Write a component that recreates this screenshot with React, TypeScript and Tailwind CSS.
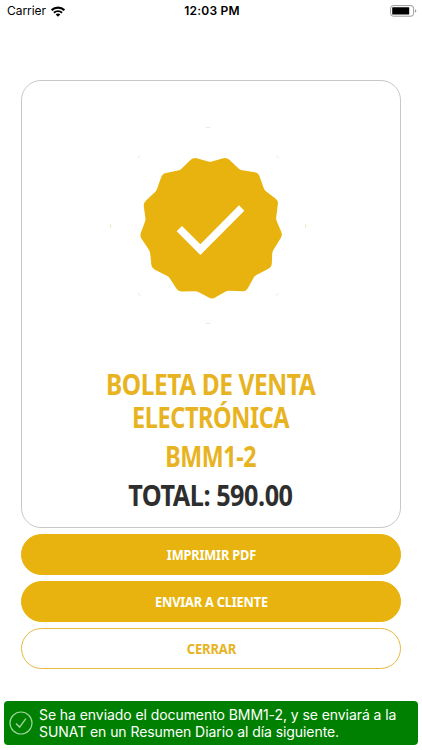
type Point = [number, number];

const badgeTips: Point[] = [
  [280, 112], [380, 112], [475, 158], [535, 242], [548, 345], [515, 441], [438, 514],
  [336, 538], [235, 515], [155, 444], [119, 348], [130, 249], [187, 161],
];

const badgeValleys: Point[] = [
  [330, 126], [421, 150], [493, 210], [528, 298], [517, 395], [464, 468], [381, 512],
  [291, 514], [206, 470], [150, 394], [137, 300], [169, 213], [240, 150],
];

// Small marks in a ring around the badge
const sparks = [
  "M317 23h14", "M112 114l9-8", "M528 106l8 8", "M32 312v12",
  "M617 312v12", "M113 519l9 8", "M528 527l8-7", "M317 610h14",
];

function roundedPath(points: Point[]) {
  const toward = (a: Point, b: Point, radius: number) => {
    const d = Math.hypot(b[0] - a[0], b[1] - a[1]);
    const x = a[0] + ((b[0] - a[0]) * radius) / d;
    const y = a[1] + ((b[1] - a[1]) * radius) / d;
    return `${x.toFixed(1)} ${y.toFixed(1)}`;
  };
  return (
    points
      .map((p, i) => {
        const prev = points[(i + points.length - 1) % points.length];
        const next = points[(i + 1) % points.length];
        // tips are rounder than the valleys between them
        const radius = i % 2 === 0 ? 11 : 6;
        return `${i === 0 ? "M" : "L"}${toward(p, prev, radius)}Q${p[0]} ${p[1]} ${toward(p, next, radius)}`;
      })
      .join("") + "Z"
  );
}

const badgePath = roundedPath(badgeTips.flatMap((tip, i) => [tip, badgeValleys[i]]));

function StatusBar() {
  return (
    <header className="grid h-[22px] grid-cols-3 items-center pl-[7px] pr-[5px] text-xs leading-none text-black">
      <div className="flex items-center gap-[5px]">
        <span className="tracking-[-0.05px]">Carrier</span>
        <svg viewBox="0 0 14 11" className="h-[11px] w-[14px]" fill="none" stroke="black">
          <path d="M0.6 4.2C4.1.8 9.9.8 13.4 4.2" strokeWidth="2.2" />
          <path d="M2.9 6.7C5.2 4.6 8.8 4.6 11.1 6.7" strokeWidth="1.9" />
          <path d="M4.7 8.4C6.1 7.2 7.9 7.2 9.3 8.4L7 10.7Z" fill="black" stroke="none" />
        </svg>
      </div>
      <span className="text-center font-semibold tracking-[0.2px]">12:03 PM</span>
      <svg viewBox="0 0 27 12" className="h-3 w-[27px] justify-self-end">
        <rect x="0.6" y="0.6" width="23" height="10.6" rx="2.6" fill="white" stroke="#9a9a9a" />
        <rect x="2.2" y="2.2" width="17" height="7.4" rx="0.6" fill="black" />
        <path d="M25 4.2c1.8.5 1.8 2.9 0 3.4z" fill="#999" />
      </svg>
    </header>
  );
}

function VerifiedBadge() {
  return (
    <svg viewBox="0 0 660 630" className="mr-[2px] h-[210px] w-[220px]">
      <path d={badgePath} fill="#e8b30e" />
      <path d="M230 334l16-16 55 55 116-117 16 16-132 133z" fill="white" />
      {sparks.map((d) => (
        <path key={d} d={d} stroke="#f1e8cc" strokeWidth="3" fill="none" />
      ))}
    </svg>
  );
}

const buttonBase =
  "flex h-[41px] w-full items-center justify-center rounded-full border font-['Noto_Sans'] text-[15px] font-bold tracking-[-0.2px]";

export default function App() {
  return (
    <div className="flex h-[750px] w-[422px] flex-col overflow-hidden bg-white font-['Inter',sans-serif]">
      <StatusBar />

      <main className="mt-[57.5px] flex flex-col px-[21px]">
        <section className="flex h-[448px] flex-col items-center rounded-[20px] border border-[#c8c8c8] pt-[39.5px] pr-px font-['Noto_Sans'] text-[28px] font-bold leading-[33px] tracking-[-0.5px] text-[#e8b321]">
          <VerifiedBadge />
          <h1 className="mt-[38px] flex flex-col items-center whitespace-nowrap">
            <span className="scale-x-[0.875]">BOLETA DE VENTA</span>
            <span className="scale-x-[0.84]">ELECTRÓNICA</span>
          </h1>
          <p className="mt-[6px] scale-x-[0.83]">BMM1-2</p>
          <p className="mt-[6px] scale-x-[0.9] whitespace-nowrap text-[#2e2e2e]">TOTAL: 590.00</p>
        </section>

        <div className="mt-[6px] flex flex-col gap-[6px]">
          <button type="button" className={`${buttonBase} border-[#e8b30e] bg-[#e8b30e] text-white`}>
            <span className="scale-x-[0.85]">IMPRIMIR PDF</span>
          </button>
          <button type="button" className={`${buttonBase} border-[#e8b30e] bg-[#e8b30e] text-white`}>
            <span className="scale-x-[0.85]">ENVIAR A CLIENTE</span>
          </button>
          <button type="button" className={`${buttonBase} border-[#e8b840] bg-white text-[#e8b321]`}>
            <span className="scale-x-[0.87]">CERRAR</span>
          </button>
        </div>
      </main>

      <div className="mx-1 mt-auto mb-[5px] flex h-[44px] items-center rounded-[4px] bg-[#008000] pl-[5px] text-white">
        <svg viewBox="0 0 24 24" className="h-6 w-6 shrink-0" fill="none" stroke="#9bd49b">
          <circle cx="12" cy="12" r="11" strokeWidth="1.2" />
          <path d="M7 12.5l3.6 3.6 6.3-8.5" strokeWidth="1.4" />
        </svg>
        <p className="ml-[6px] whitespace-nowrap text-sm leading-[17px] tracking-[-0.07px]">
          Se ha enviado el documento BMM1-2, y se enviará a la
          <br />
          SUNAT en un Resumen Diario al día siguiente.
        </p>
      </div>
    </div>
  );
}
